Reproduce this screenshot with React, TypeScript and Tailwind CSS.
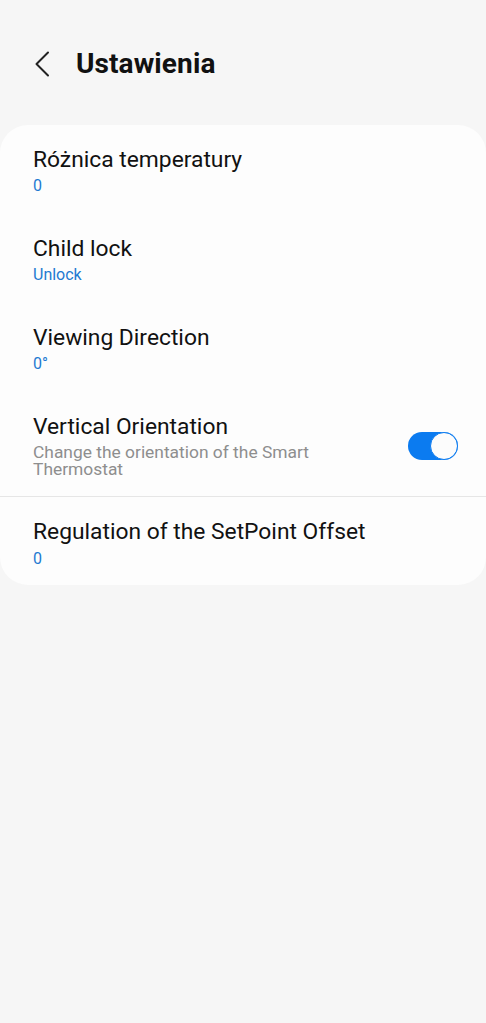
const Item = ({ title, value }: { title: string; value: string }) => (
  <div className="px-[33px] pt-[21px] pb-[18px]">
    <div className="text-[22.8px] leading-[28px] text-[#111]">{title}</div>
    <div className="text-[16px] leading-[20px] text-[#1f7ad1] mt-[2px]">{value}</div>
  </div>
);

export default function App() {
  return (
    <div className="min-h-[1023px] bg-[#f6f6f6] font-['Roboto',sans-serif]">
      <header className="h-[125px] flex items-start pt-[50px]">
        <div className="flex items-center h-[28px]">
          <button className="ml-[33px] w-[18px] flex justify-center">
            <svg width="16" height="26" viewBox="0 0 16 26" fill="none">
              <path d="M14 1.5 L2.5 13 L14 24.5" stroke="#222" strokeWidth="2" strokeLinecap="round" strokeLinejoin="round" />
            </svg>
          </button>
          <h1 className="ml-[25px] text-[28px] leading-[28px] font-bold text-[#111] tracking-[0.1px]">Ustawienia</h1>
        </div>
      </header>

      <div className="bg-[#fdfdfd] rounded-[28px]">
        <Item title="Różnica temperatury" value="0" />
        <Item title="Child lock" value="Unlock" />
        <Item title="Viewing Direction" value="0°" />
        <div className="flex items-center pl-[33px] pr-[28px] pt-[21px] pb-[18px] border-b border-[#e6e6e6]">
          <div className="flex-1">
            <div className="text-[22.8px] leading-[28px] text-[#111]">Vertical Orientation</div>
            <div className="text-[17.4px] leading-[17px] text-[#8e8e8e] mt-[3px] w-[300px]">
              Change the orientation of the Smart Thermostat
            </div>
          </div>
          <div className="relative w-[50px] h-[28px] rounded-full bg-[#0b7bf0]">
            <div className="absolute right-0 top-0 w-[28px] h-[28px] rounded-full bg-[#fcfcfc] border-[1.5px] border-[#0b7bf0]" />
          </div>
        </div>
        <div className="px-[33px] pt-[21px] pb-[16px]">
          <div className="text-[22.8px] leading-[28px] text-[#111]">Regulation of the SetPoint Offset</div>
          <div className="text-[16px] leading-[20px] text-[#1f7ad1] mt-[3px]">0</div>
        </div>
      </div>
    </div>
  );
}
